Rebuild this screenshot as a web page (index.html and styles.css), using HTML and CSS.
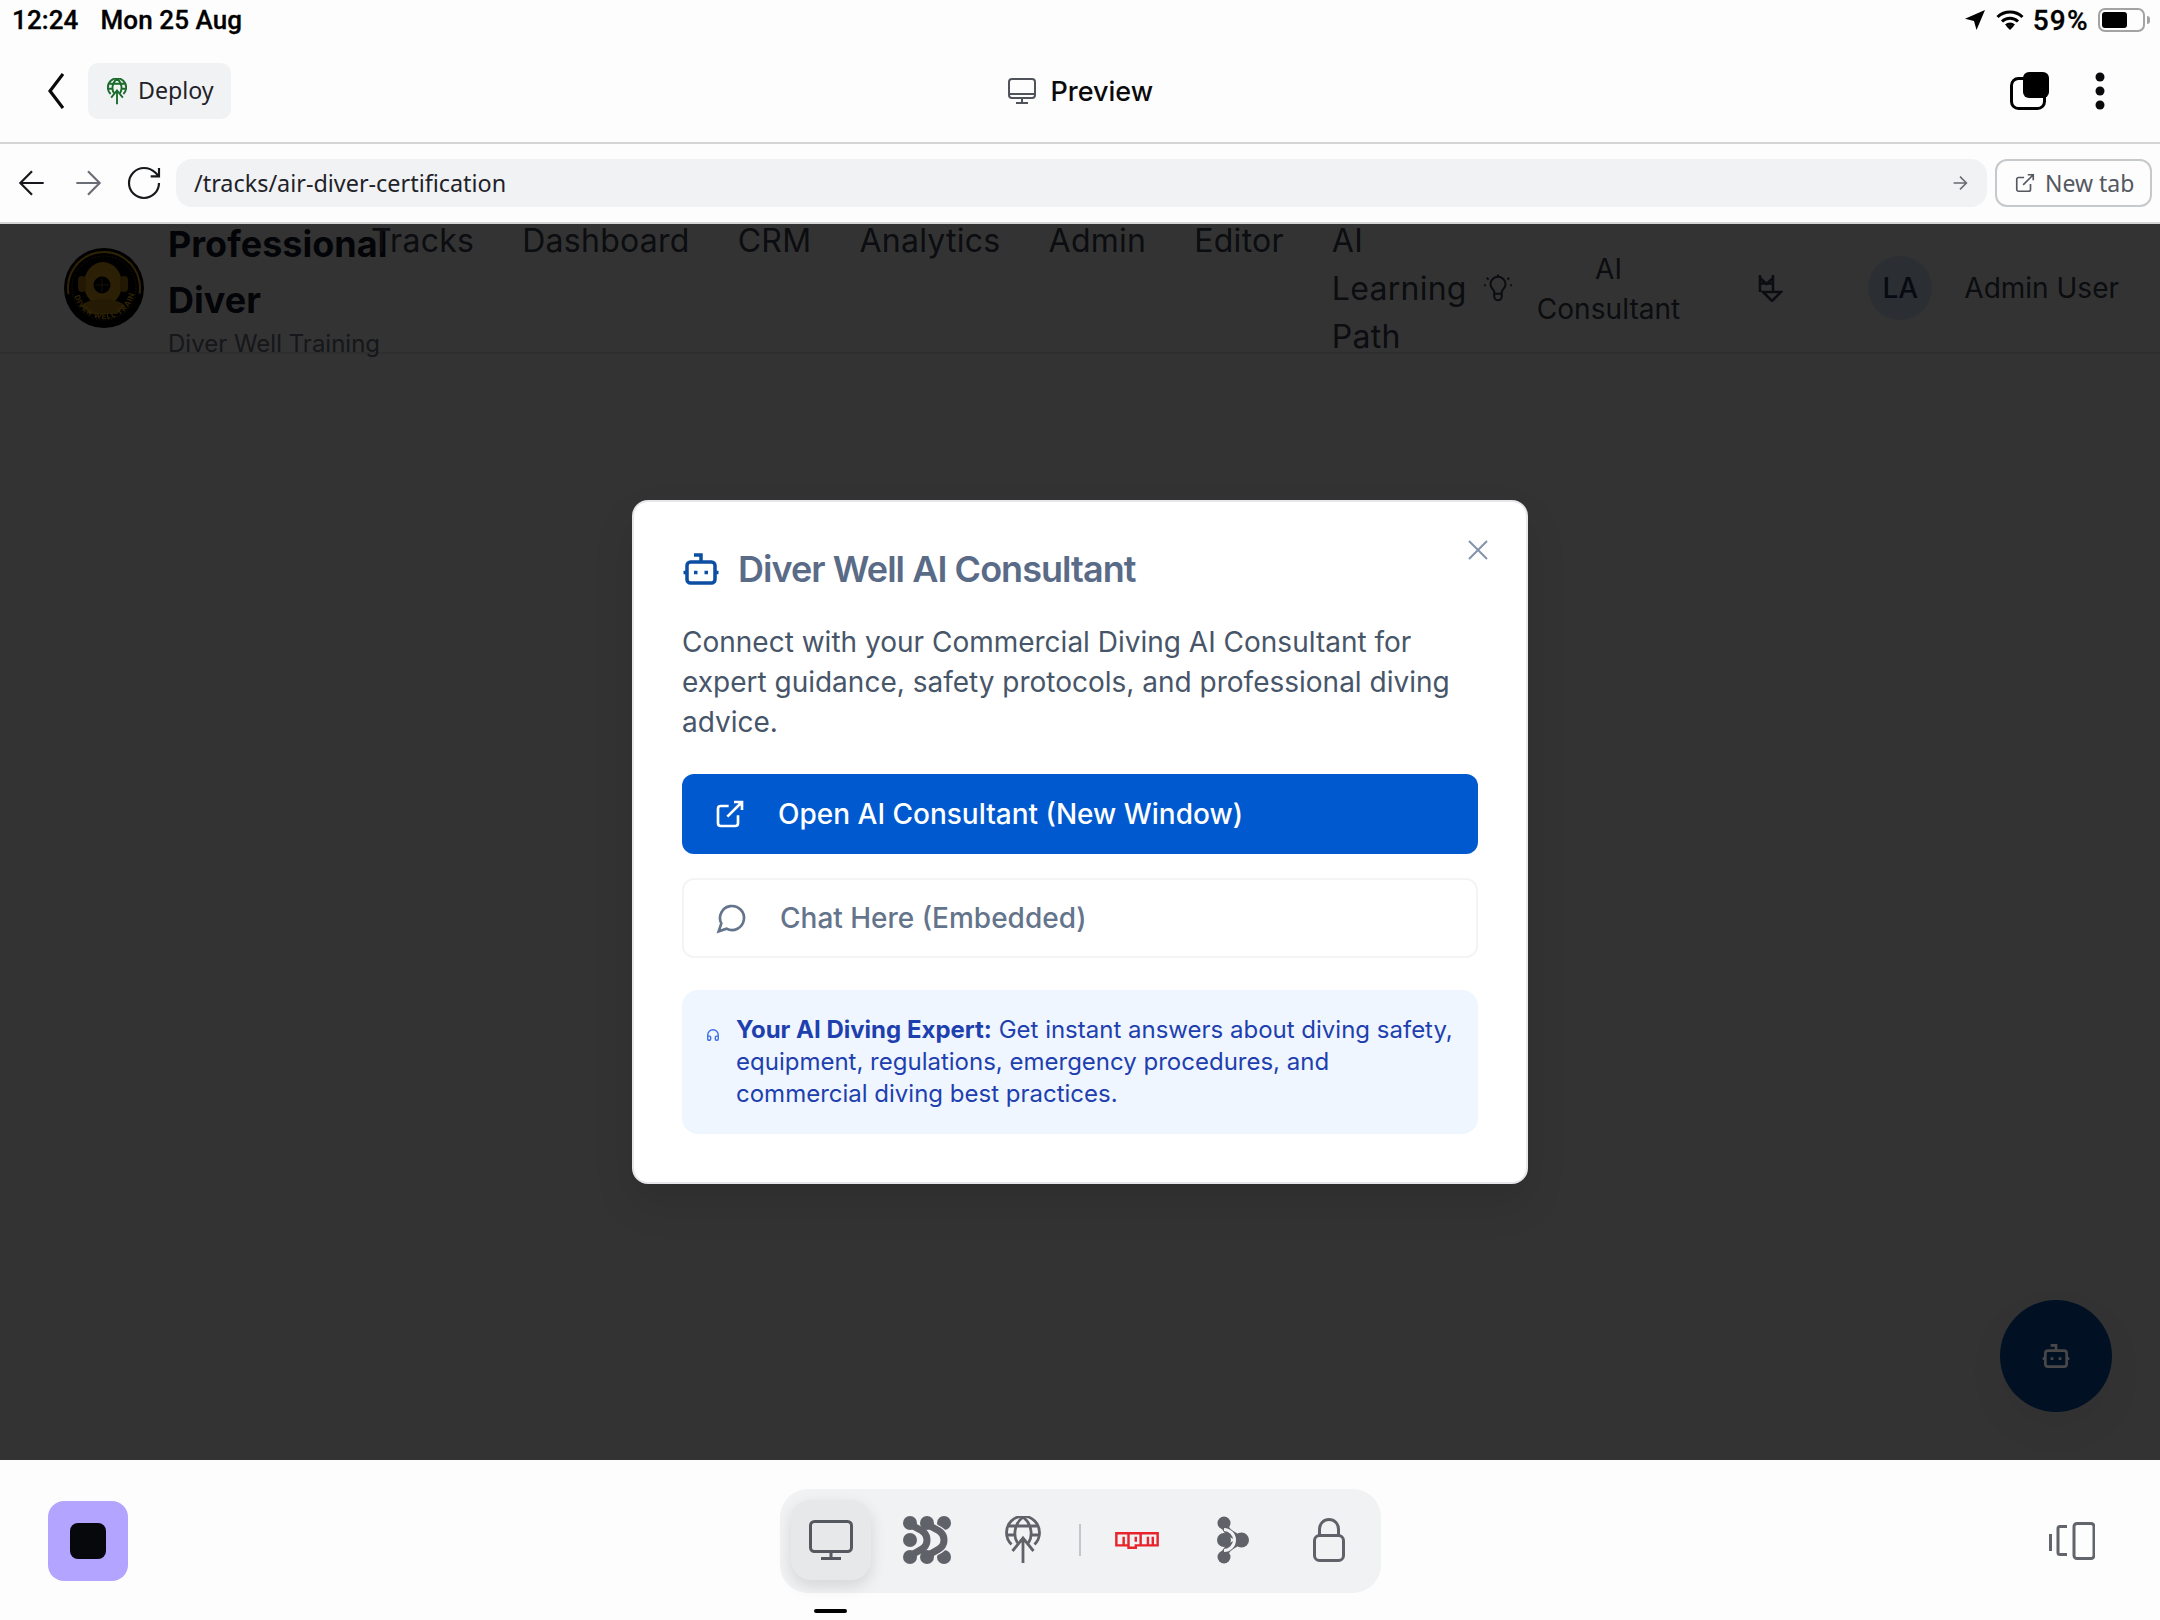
FILE: index.html
```html
<!DOCTYPE html>
<html lang="en">
<head>
<meta charset="utf-8">
<title>Preview</title>
<link rel="stylesheet" href="styles.css">
</head>
<body>
<svg class="defs" width="0" height="0" aria-hidden="true">
  <symbol id="bot" viewBox="0 0 24 24"><path d="M12 8V4H8"/><rect x="4" y="8" width="16" height="12" rx="2"/><path d="M2 14h2M20 14h2M15 13v2M9 13v2"/></symbol>
  <symbol id="globe" viewBox="0 0 36 48"><path d="M6.500 28.500A16.500 16.500 0 1 1 29.500 28.500"/><path d="M18 1C9 8 8 20 12.500 27M18 1C27 8 28 20 23.500 27M4 10H32M2 19H11M25 19H34"/><path d="M18 47V22M7.500 35 18 22 28.500 35"/></symbol>
</svg>
<div class="app">
  <div class="status">
    <div class="status-left"><span>12:24</span><span>Mon 25 Aug</span></div>
    <div class="status-right">
      <svg class="st-loc" viewBox="0 0 20 20"><path d="M20 0 11.500 20 9 11 0 8.800Z"/></svg>
      <svg class="st-wifi" viewBox="0 0 28 20"><path d="M1.500 7A18 18 0 0 1 26.500 7M6 11.500A11.500 11.500 0 0 1 22 11.500M10 15.500A6 6 0 0 1 18 15.500" /><path class="st-dot" d="M14 20 10.500 16.500A5 5 0 0 1 17.500 16.500Z"/></svg>
      <span class="st-pct">59%</span>
      <div class="battery"><div class="battery-fill"></div></div><div class="battery-nub"></div>
    </div>
  </div>
  <div class="topbar">
    <div class="topbar-left">
      <svg class="chevron" viewBox="0 0 16 36"><path d="M15 1 2 18l13 17"/></svg>
      <div class="deploy">
        <svg class="deploy-icon"><use href="#globe"/></svg>
        <span>Deploy</span>
      </div>
    </div>
    <div class="topbar-title">
      <svg class="monitor-s" viewBox="0 0 28 26"><rect x="1" y="1" width="26" height="19" rx="3"/><path d="M1.500 16H26.500M14 20v5M8 25H20"/></svg>
      <span>Preview</span>
    </div>
    <div class="topbar-right">
      <svg class="tabs" viewBox="0 0 39 38"><rect x="1.500" y="6.500" width="33" height="30" rx="7" class="tabs-back"/><rect x="13" y="0" width="26" height="26" rx="6"/></svg>
      <svg class="dots" viewBox="0 0 10 38"><circle cx="5" cy="5" r="4.500"/><circle cx="5" cy="19" r="4.500"/><circle cx="5" cy="33" r="4.500"/></svg>
    </div>
  </div>
  <div class="addrbar">
    <div class="addr-nav">
      <svg class="nav-ic" viewBox="0 0 24 24"><path d="m12 19-7-7 7-7M19 12H5"/></svg>
      <svg class="nav-ic nav-ic-dim" viewBox="0 0 24 24"><path d="M5 12h14M12 5l7 7-7 7"/></svg>
      <svg class="nav-ic" viewBox="0 0 24 24"><path d="M21 12a9 9 0 1 1-9-9c2.520 0 4.930 1 6.740 2.740L21 8M21 3v5h-5"/></svg>
    </div>
    <div class="addr-field">
      <span>/tracks/air-diver-certification</span>
      <svg class="addr-go" viewBox="0 0 24 24"><path d="M5 12h14M12 5l7 7-7 7"/></svg>
    </div>
    <div class="newtab">
      <svg class="newtab-ic" viewBox="0 0 24 24"><path d="M15 3h6v6M10 14 21 3M18 13v6a2 2 0 0 1-2 2H5a2 2 0 0 1-2-2V8a2 2 0 0 1 2-2h6"/></svg>
      <span>New tab</span>
    </div>
  </div>

  <main class="preview">
    <header class="site-header">
      <div class="brand">
        <svg class="logo" viewBox="0 0 80 80">
          <circle cx="40" cy="40" r="40" fill="#000"/>
          <circle cx="40" cy="40" r="36" fill="none" stroke="#e3ad14" stroke-width="2" stroke-dasharray="125 101" transform="rotate(170 40 40)"/>
          <circle cx="40" cy="40" r="32" fill="none" stroke="#b98c14" stroke-width="1" stroke-dasharray="1 2"/>
          <ellipse cx="39" cy="36" rx="19" ry="22" fill="#d8a01c"/>
          <rect x="14" y="28" width="8" height="16" rx="4" fill="#a87a14"/>
          <rect x="56" y="28" width="8" height="16" rx="4" fill="#a87a14"/>
          <path d="M17 58c6-9 38-9 44 0l-8 8H26Z" fill="#b8861a"/>
          <circle cx="38" cy="37" r="8.500" fill="#000"/>
          <path d="M38 30v14M31 37h14" stroke="#6a5414" stroke-width="1"/>
          <path id="logo-arc" d="M10 46a30.500 30.500 0 0 0 60 0" fill="none"/>
          <text class="logo-text"><textPath href="#logo-arc" startOffset="2">DIVER WELL TRAINING</textPath></text>
        </svg>
        <div class="brand-text">
          <div class="brand-name">Professional Diver</div>
          <div class="brand-sub">Diver Well Training</div>
        </div>
      </div>
      <nav class="site-nav">
        <a>Tracks</a>
        <a>Dashboard</a>
        <a>CRM</a>
        <a>Analytics</a>
        <a>Admin</a>
        <a>Editor</a>
        <a class="nav-path">
          <span class="nav-path-text">AI Learning Path</span>
          <svg class="bulb" viewBox="0 0 32 32"><path d="M20 19c.3-1.300.9-2.300 2-3.300 1.300-1.200 2-2.900 2-4.700a8 8 0 0 0-16 0c0 1.300.3 2.900 2 4.700.9.900 1.700 2 2 3.300v5a4 4 0 0 0 8 0ZM12 21h8M16 .5V2M4 4l2 2M28 4l-2 2M1 12h2M29 12h2"/></svg>
        </a>
        <a class="nav-consult">AI<br>Consultant</a>
      </nav>
      <svg class="merge" viewBox="0 0 26 28"><path d="M3 1v17M16 1v17M3 4l6.500 6 6.500-6M3 9.500H16M6 18H24L15 27Z"/></svg>
      <div class="user">
        <div class="avatar">LA</div>
        <span>Admin User</span>
      </div>
    </header>
    <div class="overlay">
      <section class="modal">
        <svg class="close" viewBox="0 0 20 20"><path d="M1 1l18 18M19 1 1 19"/></svg>
        <h2 class="modal-title">
          <svg class="title-bot"><use href="#bot"/></svg>
          <span>Diver Well AI Consultant</span>
        </h2>
        <p class="modal-desc">Connect with your Commercial Diving AI Consultant for expert guidance, safety protocols, and professional diving advice.</p>
        <div class="btn btn-primary">
          <svg class="btn-ic" viewBox="0 0 24 24"><path d="M15 3h6v6M10 14 21 3M18 13v6a2 2 0 0 1-2 2H5a2 2 0 0 1-2-2V8a2 2 0 0 1 2-2h6"/></svg>
          <span>Open AI Consultant (New Window)</span>
        </div>
        <div class="btn btn-outline">
          <svg class="btn-ic" viewBox="0 0 24 24"><path d="M7.900 20A9 9 0 1 0 4 16.100L2 22Z"/></svg>
          <span>Chat Here (Embedded)</span>
        </div>
        <div class="info">
          <svg class="info-ic" viewBox="0 0 24 24"><path d="M3 14h3a2 2 0 0 1 2 2v3a2 2 0 0 1-2 2H5a2 2 0 0 1-2-2v-7a9 9 0 0 1 18 0v7a2 2 0 0 1-2 2h-1a2 2 0 0 1-2-2v-3a2 2 0 0 1 2-2h3"/></svg>
          <p><strong>Your AI Diving Expert:</strong> Get instant answers about diving safety, equipment, regulations, emergency procedures, and commercial diving best practices.</p>
        </div>
      </section>
    </div>
    <div class="fab"><svg class="fab-ic"><use href="#bot"/></svg></div>
  </main>

  <footer class="dock">
    <div class="dock-left"><div class="stop"><div class="stop-sq"></div></div></div>
    <div class="dock-bar">
      <div class="tile tile-on">
        <svg class="ic-monitor" viewBox="0 0 44 40"><rect x="1.500" y="1.500" width="41" height="30" rx="4"/><path d="M22 32v6M12 38.500H32"/></svg>
      </div>
      <div class="tile">
        <svg class="ic-flow" viewBox="0 0 48 48">
          <circle cx="41" cy="7" r="7"/><circle cx="7" cy="24" r="7"/><circle cx="41" cy="41" r="7"/>
          <path class="ic-flow-gap" d="M7 7C12 14 24 13 24 24S12 34 7 41M24 7C29 14 41 13 41 24S29 34 24 41"/>
          <path class="ic-flow-link" d="M7 7C12 14 24 13 24 24S12 34 7 41M24 7C29 14 41 13 41 24S29 34 24 41"/>
          <circle cx="7" cy="7" r="7"/><circle cx="24" cy="7" r="7"/>
          <circle cx="7" cy="41" r="7"/><circle cx="24" cy="41" r="7"/>
        </svg>
      </div>
      <div class="tile"><svg class="ic-globe"><use href="#globe"/></svg></div>
      <div class="dock-sep"></div>
      <div class="tile">
        <svg class="ic-npm" viewBox="0 7.334 24 9.332"><path d="M0 7.334v8h6.666v1.332H12v-1.332h12v-8H0zm6.666 6.664H5.334v-4H3.999v4H1.335V8.667h5.331v5.331zm4 0v1.336H8.001V8.667h5.334v5.332h-2.669v-.001zm12.001 0h-1.330v-4h-1.336v4h-1.335v-4h-1.330v4h-2.671V8.667h8.002v5.331zM10.665 10H12v2.667h-1.335V10z"/></svg>
      </div>
      <div class="tile">
        <svg class="ic-branch" viewBox="0 0 32 48">
          <circle cx="7" cy="7" r="6.500"/><circle cx="7" cy="41" r="6.500"/>
          <path class="ic-branch-arm" d="M7 7C8 17 18 19 24 24 18 29 8 31 7 41"/>
          <circle cx="24.500" cy="24" r="7.500"/>
          <path class="ic-branch-gap" d="M7 13.500A10.500 10.500 0 0 1 7 34.500"/>
          <circle cx="7" cy="24" r="7"/>
        </svg>
      </div>
      <div class="tile">
        <svg class="ic-lock" viewBox="0 0 32 44"><rect x="1.500" y="17.500" width="29" height="25" rx="5"/><path d="M6.500 17.500V11a9.500 9.500 0 0 1 19 0v6.500"/></svg>
      </div>
    </div>
    <div class="dock-right">
      <svg class="ic-panel" viewBox="0 0 46 38"><path d="M1.500 12v17M18 4.500h-7a2 2 0 0 0-2 2v24a2 2 0 0 0 2 2h7"/><rect x="25" y="1.500" width="20" height="35" rx="3"/></svg>
    </div>
    <div class="home"></div>
  </footer>
</div>
</body>
</html>
```
FILE: styles.css
```css
* { box-sizing: border-box; }
html, body { margin: 0; height: 100%; }
body { font-family: Inter, "Liberation Sans", sans-serif; background: #fdfdfd; color: #0a0a0c; overflow: hidden; }
svg { display: block; flex: none; }
.defs { position: absolute; }
.app { display: flex; flex-direction: column; height: 1620px; }

/* status bar */
.status { height: 40px; flex: none; display: flex; justify-content: space-between; align-items: center; padding: 0 10px 0 12px; background: #fdfdfd; font-family: Roboto, Inter, sans-serif; font-weight: 500; font-size: 26px; letter-spacing: .1px; color: #000; -webkit-text-stroke: .3px #000; }
.status-left { display: flex; gap: 22px; }
.status-right { display: flex; align-items: center; }
.st-loc { width: 20px; height: 20px; fill: #000; stroke: none; margin-right: 11px; }
.st-wifi { width: 28px; height: 20px; fill: none; stroke: #000; stroke-width: 3; margin-right: 9px; }
.st-dot { fill: #000; stroke: none; }
.st-pct { font-size: 28px; letter-spacing: 1.300px; }
.battery { width: 47px; height: 24px; margin-left: 9px; border: 2px solid #a3a3a3; border-radius: 7px; padding: 2px; }
.battery-fill { width: 25px; height: 100%; background: #000; border-radius: 3px; }
.battery-nub { width: 3px; height: 8px; margin-left: 2px; background: #a3a3a3; border-radius: 0 3px 3px 0; }

/* top bar */
.topbar { height: 104px; flex: none; display: grid; grid-template-columns: 1fr auto 1fr; align-items: center; border-bottom: 2px solid #d4d4d4; padding: 0 55px 0 48px; background: #fdfdfd; }
.topbar-left { display: flex; align-items: center; gap: 24px; }
.chevron { width: 16px; height: 36px; fill: none; stroke: #0a0a0c; stroke-width: 3.200; }
.deploy { display: flex; align-items: center; gap: 11px; width: 143px; height: 56px; padding-left: 19px; background: #f1f2f4; border-radius: 10px; font-family: "Noto Sans", sans-serif; font-size: 23.200px; line-height: 54px; color: #1f2329; }
.deploy span { position: relative; top: -1px; }
.deploy-icon { width: 20px; height: 27px; fill: none; stroke: #1c6b2c; stroke-width: 3.400; }
.topbar-title { display: flex; align-items: center; gap: 14px; font-size: 27px; font-weight: 500; color: #0a0a0c; margin-left: 8.500px; }
.monitor-s { width: 28px; height: 26px; fill: none; stroke: #50535a; stroke-width: 2; }
.topbar-right { display: flex; justify-content: flex-end; align-items: center; gap: 46px; }
.tabs { width: 39px; height: 38px; fill: #000; }
.tabs-back { fill: #fdfdfd; stroke: #000; stroke-width: 3; }
.dots { width: 10px; height: 38px; fill: #0a0a0c; }

/* address bar */
.addrbar { height: 80px; flex: none; display: flex; align-items: center; gap: 12px; padding: 0 8px 0 12px; border-bottom: 2px solid #d4d4d4; background: #fdfdfd; }
.addr-nav { display: flex; gap: 16px; }
.nav-ic { width: 40px; height: 40px; fill: none; stroke: #17181b; stroke-width: 1.300; }
.nav-ic-dim { stroke: #6b6e76; }
.addr-field { flex: 1; height: 48px; display: flex; align-items: center; justify-content: space-between; padding: 0 16px 0 18px; background: #f1f2f4; border-radius: 16px; font-family: "Noto Sans", sans-serif; font-size: 23.400px; color: #1f2329; }
.addr-go { width: 22px; height: 22px; fill: none; stroke: #666a72; stroke-width: 1.700; }
.newtab { width: 157px; height: 48px; margin-left: -4px; display: flex; align-items: center; gap: 9px; padding-left: 17px; border: 2px solid #c6c9cc; border-radius: 12px; font-family: "Noto Sans", sans-serif; font-size: 23px; color: #55585f; }
.newtab-ic { width: 22px; height: 22px; fill: none; stroke: #55585f; stroke-width: 1.800; }

/* page under the dialog */
.preview { flex: 1; position: relative; background: #fff; overflow: hidden; }
.site-header { height: 130px; display: flex; align-items: center; padding-left: 64px; border-bottom: 2px solid #e5e7eb; }
.brand { display: flex; align-items: center; gap: 24px; flex: none; }
.logo { width: 80px; height: 80px; }
.logo-text { font-size: 7.500px; font-weight: 700; fill: #e3ad14; letter-spacing: .8px; }
.brand-text { width: 156px; height: 144px; }
.brand-name { font-size: 36px; line-height: 56px; font-weight: 700; color: #111827; }
.brand-sub { font-size: 24px; line-height: 32px; color: #6b7280; white-space: nowrap; }
.site-nav { margin-left: 47px; margin-top: 2px; height: 144px; display: flex; gap: 48px; align-items: flex-start; font-size: 32px; line-height: 48px; letter-spacing: .27px; color: #374151; }
.nav-path { display: flex; align-items: center; gap: 16px; margin-right: -24px; }
.nav-path-text { width: min-content; }
.bulb { width: 30px; height: 32px; fill: none; stroke: #374151; stroke-width: 2.200; }
.nav-consult { align-self: center; text-align: center; font-size: 28px; line-height: 40px; letter-spacing: .05px; }
.merge { width: 26px; height: 28px; margin-left: 77px; fill: none; stroke: #374151; stroke-width: 2.600; }
.user { display: flex; align-items: center; gap: 32px; margin-left: 85px; font-size: 28px; color: #374151; }
.avatar { width: 64px; height: 64px; border-radius: 50%; background: #d6e6f8; color: #1e3a5f; display: flex; align-items: center; justify-content: center; font-size: 28px; font-weight: 500; }

.overlay { position: absolute; inset: 0; background: rgba(0, 0, 0, .8); display: flex; align-items: center; justify-content: center; }
.fab { position: absolute; right: 48px; bottom: 48px; width: 112px; height: 112px; border-radius: 50%; background: #011023; display: flex; align-items: center; justify-content: center; box-shadow: 0 16px 40px rgba(0, 0, 0, .05); }
.fab-ic { width: 32px; height: 32px; fill: none; stroke: #484848; stroke-width: 2; }

/* dialog */
.modal { position: relative; width: 896px; height: 684px; padding: 48px; background: #fff; border: 2px solid #e5e7eb; border-radius: 16px; box-shadow: 0 20px 40px rgba(0, 0, 0, .1); }
.close { position: absolute; top: 38px; right: 38px; width: 20px; height: 20px; fill: none; stroke: #8393ab; stroke-width: 2; }
.modal-title { margin: -1px 0 0; display: flex; align-items: center; gap: 16px; height: 40px; font-size: 36px; font-weight: 600; letter-spacing: -.95px; color: #5a6b87; }
.title-bot { width: 42px; height: 42px; fill: none; stroke: #0b4ea2; stroke-width: 2; margin-left: -2px; }
.modal-desc { margin: 33px 0 32px; font-size: 28px; line-height: 40px; color: #475569; }
.btn { height: 80px; display: flex; align-items: center; gap: 32px; padding-left: 32px; border-radius: 12px; font-size: 28px; font-weight: 500; }
.btn-ic { width: 32px; height: 32px; fill: none; stroke-width: 2; }
.btn-primary { background: #0059cf; color: #fff; }
.btn-primary .btn-ic { stroke: #fff; }
.btn-outline { margin-top: 24px; border: 2px solid #f3f4f6; color: #64748b; }
.btn-outline .btn-ic { stroke: #64748b; }
.info { margin-top: 32px; display: flex; gap: 16px; padding: 24px; height: 144px; border-radius: 16px; background: #eff6ff; color: #1e40af; font-size: 24px; line-height: 32px; }
.info p { margin: 0; }
.info strong { font-weight: 700; }
.info-ic { width: 14px; height: 14px; fill: none; stroke: #3b6ee6; stroke-width: 2.400; margin-top: 14px; }

/* bottom dock */
.dock { position: relative; height: 160px; flex: none; display: grid; grid-template-columns: 1fr auto 1fr; align-items: center; padding: 2px 48px 0; background: #fdfdfd; }
.stop { width: 80px; height: 80px; display: flex; align-items: center; justify-content: center; border-radius: 16px; background: #b3a4ff; }
.stop-sq { width: 36px; height: 36px; border-radius: 8px; background: #06080c; }
.dock-bar { height: 104px; padding: 11px 12px 13px 11px; display: flex; align-items: center; gap: 16px; border-radius: 28px; background: #f1f2f4; }
.tile { width: 80px; height: 80px; display: flex; align-items: center; justify-content: center; border-radius: 20px; }
.tile-on { background: #e7e8ea; box-shadow: 0 6px 16px rgba(0, 0, 0, .12); }
.dock-sep { width: 2px; height: 32px; background: #c4c6c9; }
.ic-monitor { width: 44px; height: 40px; fill: none; stroke: #55585f; stroke-width: 3; }
.ic-flow { width: 48px; height: 48px; fill: #5f6268; }
.ic-flow-gap { fill: none; stroke: #f1f2f4; stroke-width: 9.500; }
.ic-flow-link { fill: none; stroke: #5f6268; stroke-width: 7; }
.ic-globe { width: 36px; height: 48px; fill: none; stroke: #5f6268; stroke-width: 2.800; }
.ic-npm { width: 44px; height: 17px; fill: #e8232b; }
.ic-branch { width: 32px; height: 48px; fill: #5f6268; }
.ic-branch-arm { fill: none; stroke: #5f6268; stroke-width: 7; }
.ic-branch-gap { fill: none; stroke: #f1f2f4; stroke-width: 3; }
.ic-lock { width: 32px; height: 44px; fill: none; stroke: #5f6268; stroke-width: 3; }
.dock-right { display: flex; justify-content: flex-end; padding-right: 17px; }
.ic-panel { width: 46px; height: 38px; fill: none; stroke: #62656c; stroke-width: 3; }
.home { position: absolute; left: 814px; bottom: 7px; width: 33px; height: 4px; background: #000; border-radius: 2px; }
```
